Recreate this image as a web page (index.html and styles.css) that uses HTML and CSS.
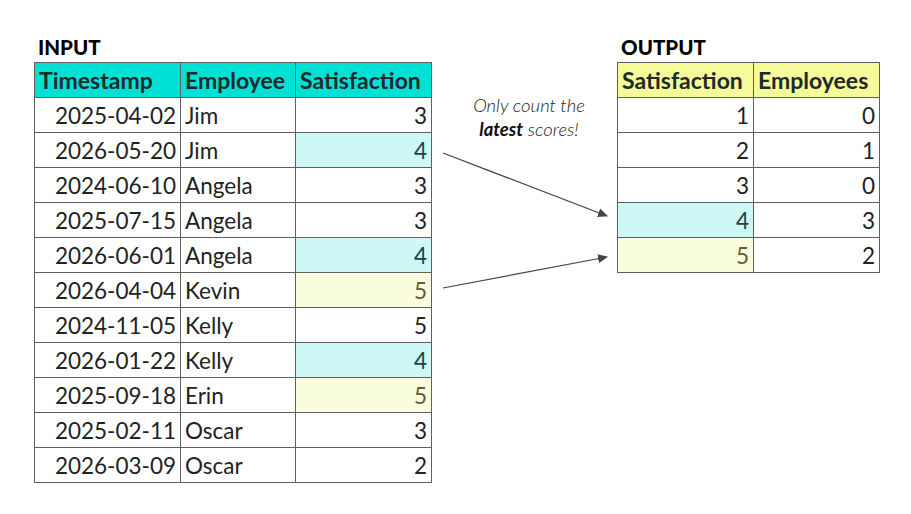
FILE: index.html
```html
<!DOCTYPE html>
<html>
<head>
<meta charset="utf-8">
<link rel="stylesheet" href="styles.css">
</head>
<body>
<div class="page">
  <section class="block block-input">
    <div class="label">INPUT</div>
    <table class="grid input-grid">
      <colgroup><col class="c-ts"><col class="c-emp"><col class="c-sat"></colgroup>
      <tr class="head teal"><th>Timestamp</th><th>Employee</th><th>Satisfaction</th></tr>
      <tr><td class="num">2025-04-02</td><td>Jim</td><td class="num">3</td></tr>
      <tr><td class="num">2026-05-20</td><td>Jim</td><td class="num hl-cyan">4</td></tr>
      <tr><td class="num">2024-06-10</td><td>Angela</td><td class="num">3</td></tr>
      <tr><td class="num">2025-07-15</td><td>Angela</td><td class="num">3</td></tr>
      <tr><td class="num">2026-06-01</td><td>Angela</td><td class="num hl-cyan">4</td></tr>
      <tr><td class="num">2026-04-04</td><td>Kevin</td><td class="num hl-yellow">5</td></tr>
      <tr><td class="num">2024-11-05</td><td>Kelly</td><td class="num">5</td></tr>
      <tr><td class="num">2026-01-22</td><td>Kelly</td><td class="num hl-cyan">4</td></tr>
      <tr><td class="num">2025-09-18</td><td>Erin</td><td class="num hl-yellow">5</td></tr>
      <tr><td class="num">2025-02-11</td><td>Oscar</td><td class="num">3</td></tr>
      <tr><td class="num">2026-03-09</td><td>Oscar</td><td class="num">2</td></tr>
    </table>
  </section>
  <section class="middle">
    <p class="note">Only count the<br><b>latest</b> scores!</p>
  </section>
  <section class="block block-output">
    <div class="label">OUTPUT</div>
    <table class="grid output-grid">
      <colgroup><col class="c-osat"><col class="c-oemp"></colgroup>
      <tr class="head yellow"><th>Satisfaction</th><th>Employees</th></tr>
      <tr><td class="num">1</td><td class="num">0</td></tr>
      <tr><td class="num">2</td><td class="num">1</td></tr>
      <tr><td class="num">3</td><td class="num">0</td></tr>
      <tr><td class="num hl-cyan">4</td><td class="num">3</td></tr>
      <tr><td class="num hl-yellow">5</td><td class="num">2</td></tr>
    </table>
  </section>
  <svg class="arrows" width="911" height="514" viewBox="0 0 911 514">
    <defs>
      <marker id="head" markerWidth="10" markerHeight="10" refX="9" refY="5" orient="auto" markerUnits="userSpaceOnUse">
        <path d="M0,0.5 L10,5 L0,9.5 Z" fill="#444"/>
      </marker>
    </defs>
    <line x1="443" y1="153" x2="607" y2="216" stroke="#444" stroke-width="1.2" marker-end="url(#head)"/>
    <line x1="443" y1="288" x2="607" y2="257" stroke="#444" stroke-width="1.2" marker-end="url(#head)"/>
  </svg>
</div>
</body>
</html>
```

FILE: styles.css
```css
html, body {
  margin: 0;
  padding: 0;
  background: #ffffff;
}
body {
  font-family: "Lato", "Liberation Sans", sans-serif;
  color: #222222;
}
.page {
  position: relative;
  width: 911px;
  height: 514px;
  box-sizing: border-box;
  padding: 35px 0 0 34px;
  display: flex;
  align-items: flex-start;
}
.label {
  font-size: 20.5px;
  font-weight: 900;
  line-height: 24px;
  height: 24px;
  color: #000;
  padding-left: 4px;
  margin-bottom: 3px;
}
.grid {
  border-collapse: collapse;
  table-layout: fixed;
  font-size: 22.5px;
}
.grid tr {
  height: 35px;
}
.grid th, .grid td {
  border: 1px solid #5f5f5f;
  padding: 0 4px;
  height: 34px;
  line-height: 27px;
  white-space: nowrap;
  overflow: hidden;
  vertical-align: middle;
}
.grid th {
  font-size: 23px;
  font-weight: 700;
  text-align: left;
  color: #1e2a2a;
}
.grid td {
  text-align: left;
}
.grid td.num {
  text-align: right;
}
.input-grid { width: 398px; }
.c-ts { width: 146px; }
.c-emp { width: 115px; }
.c-sat { width: 136px; }
.output-grid { width: 263px; }
.c-osat { width: 136px; }
.c-oemp { width: 126px; }
.head.teal th { background: #00e1d6; }
.head.yellow th { background: #f5fb98; }
.grid td.hl-cyan {
  background: #cdf8f5;
  color: #1d4343;
}
.grid td.hl-yellow {
  background: #fafddd;
  color: #5f5a3a;
}
.middle {
  width: 185px;
  flex: none;
}
.block-input { flex: none; width: 398px; }
.block-output { flex: none; width: 263px; }
.note {
  margin: 58px 0 0 0;
  padding-left: 9px;
  text-align: center;
  font-size: 18.5px;
  line-height: 24px;
  font-style: italic;
  font-weight: 300;
  color: #222222;
}
.note b {
  font-weight: 700;
  color: #111;
}
.arrows {
  position: absolute;
  left: 0;
  top: 0;
  pointer-events: none;
}
```
